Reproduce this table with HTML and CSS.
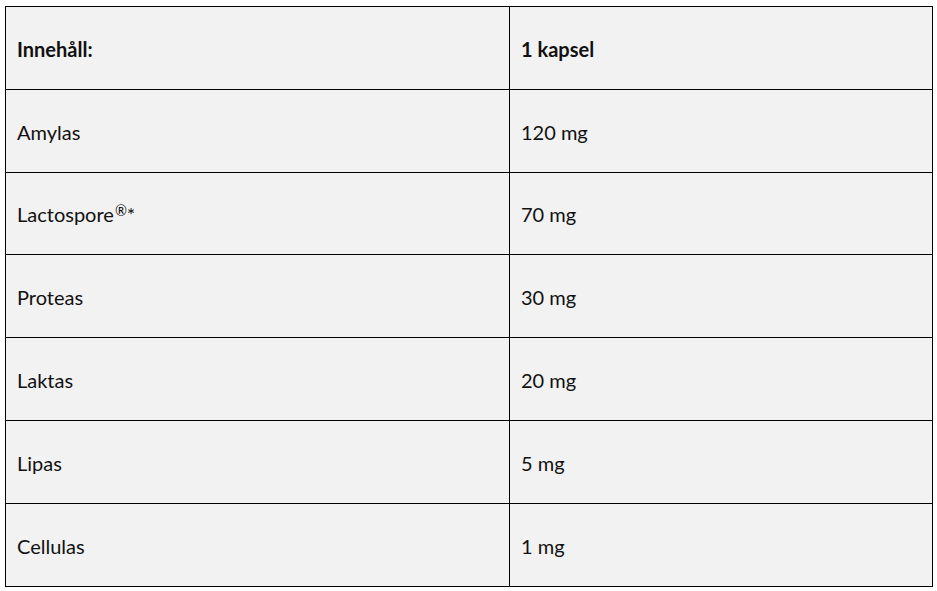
FILE: index.html
```html
<!DOCTYPE html>
<html>
<head>
<meta charset="utf-8">
<link rel="stylesheet" href="styles.css">
</head>
<body>
<table class="nutri">
  <tr class="head"><td class="c1">Innehåll:</td><td class="c2">1 kapsel</td></tr>
  <tr><td class="c1">Amylas</td><td class="c2">120 mg</td></tr>
  <tr><td class="c1">Lactospore<sup class="reg">®</sup>*</td><td class="c2">70 mg</td></tr>
  <tr><td class="c1">Proteas</td><td class="c2">30 mg</td></tr>
  <tr><td class="c1">Laktas</td><td class="c2">20 mg</td></tr>
  <tr><td class="c1">Lipas</td><td class="c2">5 mg</td></tr>
  <tr><td class="c1">Cellulas</td><td class="c2">1 mg</td></tr>
</table>
</body>
</html>
```
FILE: styles.css
```css
html, body {
  margin: 0;
  padding: 0;
  background: #ffffff;
}
.nutri {
  margin: 6px 0 0 5px;
  border-collapse: collapse;
  width: 928px;
  table-layout: fixed;
  font-family: "Lato", "Liberation Sans", sans-serif;
  font-size: 20px;
  color: #111111;
}
.nutri td {
  border: 1px solid #000000;
  background: #f2f2f2;
  height: 82.8px;
  padding: 2px 11px 0 11px;
  vertical-align: middle;
  box-sizing: border-box;
}
.nutri .c1 {
  width: 504px;
}
.head td {
  font-weight: bold;
}
.reg {
  font-size: 0.72em;
  vertical-align: 0.45em;
  line-height: 0;
  margin-left: 1px;
}
```
